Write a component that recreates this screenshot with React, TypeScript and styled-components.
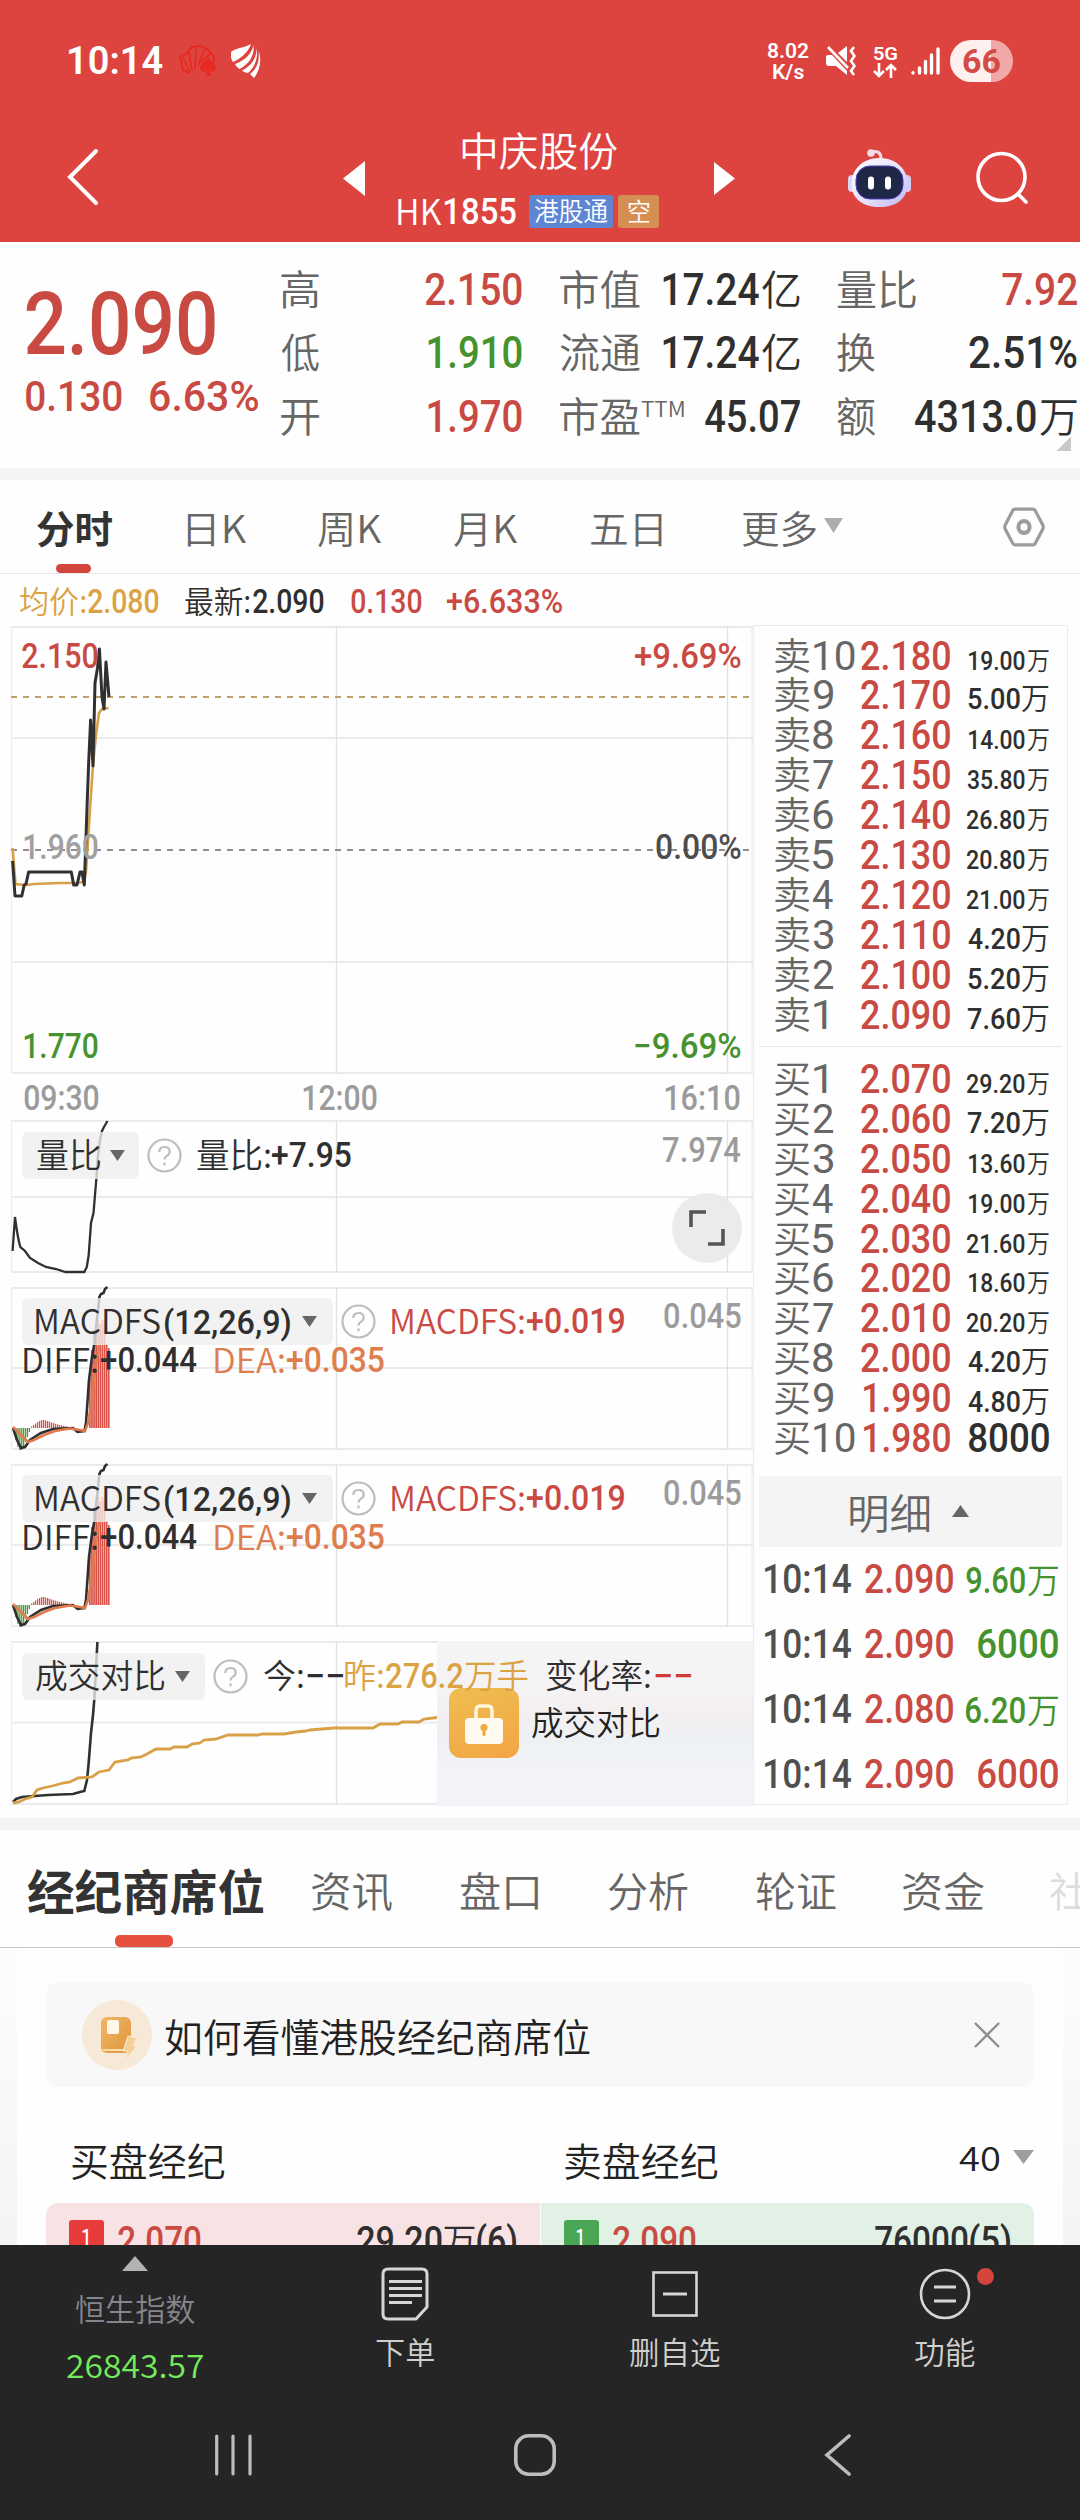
import React, { useMemo } from 'react';
import styled, { createGlobalStyle, css } from 'styled-components';

const LATIN = '"Roboto", "Liberation Sans", sans-serif';
const CJK = '"Noto Sans CJK SC", "Noto Sans", sans-serif';

const RED = '#c94a43';
const GREEN = '#46922f';
const INK = '#2f2f2f';
const GRAY = '#666666';
const MUTE = '#9b9b9b';
const GOLD = '#dba344';
const ORANGE = '#e07d4f';

const Global = createGlobalStyle`
  * { box-sizing: border-box; }
  html, body { margin: 0; padding: 0; background: #fff; }
  body { width: 1080px; height: 2520px; overflow: hidden; font-family: ${CJK}; }
  svg { display: block; flex: none; }
`;

/* ---------- condensed text: glyph run squeezed to a given ink width ---------- */
const FitBox = styled.span<{ $size: number; $cn: boolean; $color: string; $weight: number; $ml: number }>`
  display: inline-block;
  flex: none;
  height: 1em;
  line-height: 1;
  white-space: pre;
  margin-left: ${(p) => p.$ml}px;
  font-family: ${(p) => (p.$cn ? CJK : LATIN)};
  font-size: ${(p) => p.$size}px;
  font-weight: ${(p) => p.$weight};
  color: ${(p) => p.$color};
`;
const FitRun = styled.span`
  display: inline-block;
  transform-origin: 0 50%;
`;

let ctx: CanvasRenderingContext2D | null = null;

type FitProps = {
  w: number;
  s: number;
  c?: string;
  cn?: boolean;
  wt?: number;
  ml?: number;
  base?: boolean;
  children: string;
};

function Fit({ w, s, c = INK, cn = false, wt, ml = 0, base = false, children }: FitProps) {
  const weight = wt ?? (cn ? 350 : 500);
  const m = useMemo(() => {
    if (!ctx) ctx = document.createElement('canvas').getContext('2d');
    if (!ctx) return { k: 1, x: 0 };
    ctx.font = `${weight} ${s}px ${cn ? CJK : LATIN}`;
    const t = ctx.measureText(children);
    const ink = t.actualBoundingBoxLeft + t.actualBoundingBoxRight;
    const k = w / ink;
    return { k, x: t.actualBoundingBoxLeft * k };
  }, [w, s, cn, weight, children]);
  const y = cn && !base ? -0.056 * s : 0;
  return (
    <FitBox $size={s} $cn={cn} $color={c} $weight={weight} $ml={ml} style={{ width: w }}>
      <FitRun style={{ transform: `translate(${m.x}px, ${y}px) scaleX(${m.k})` }}>{children}</FitRun>
    </FitBox>
  );
}

/* ---------- page ---------- */
const Page = styled.div`
  width: 1080px;
  height: 2520px;
  overflow: hidden;
  background: #fefefe;
  display: flex;
  flex-direction: column;
`;
const Row = styled.div<{ $h?: number; $pl?: number; $pr?: number; $pt?: number; $between?: boolean }>`
  display: flex;
  align-items: center;
  flex: none;
  ${(p) => p.$h && css`height: ${p.$h}px;`}
  padding-left: ${(p) => p.$pl ?? 0}px;
  padding-right: ${(p) => p.$pr ?? 0}px;
  padding-top: ${(p) => p.$pt ?? 0}px;
  justify-content: ${(p) => (p.$between ? 'space-between' : 'flex-start')};
`;
const Band = styled.div`
  height: 12px;
  flex: none;
  background: #f4f4f4;
`;

/* ---------- header ---------- */
const Header = styled.header`
  height: 242px;
  flex: none;
  background: #dd443f;
`;
const StatusBar = styled(Row)`
  height: 118px;
  padding: 4px 67px 0 69px;
`;
const StatusGroup = styled.div`
  display: flex;
  align-items: center;
`;
const Stack = styled.div<{ $ml: number; $gap: number }>`
  display: flex;
  flex-direction: column;
  align-items: center;
  gap: ${(p) => p.$gap}px;
  margin-left: ${(p) => p.$ml}px;
`;
const Battery = styled.div`
  width: 63px;
  height: 42px;
  margin-left: 10px;
  border-radius: 21px;
  display: flex;
  align-items: center;
  justify-content: center;
  background: linear-gradient(90deg, #fdf0ef 0 41px, #f1a9a7 41px);
`;
const NavBar = styled(Row)`
  height: 120px;
`;
const TitleColumn = styled.div`
  width: 262px;
  height: 120px;
  padding-top: 3px;
  margin: 0 54px 0 33px;
  display: flex;
  flex-direction: column;
`;
const TitleLine = styled.div<{ $pl: number }>`
  height: 60px;
  flex: none;
  display: flex;
  align-items: center;
  padding-left: ${(p) => p.$pl}px;
`;
const Badge = styled.span<{ $bg: string; $w: number; $ml: number }>`
  width: ${(p) => p.$w}px;
  height: 33px;
  margin-left: ${(p) => p.$ml}px;
  display: flex;
  align-items: center;
  justify-content: center;
  border-radius: 3px;
  background: ${(p) => p.$bg};
`;
const IconSlot = styled.div<{ $ml: number; $mt?: number }>`
  margin-left: ${(p) => p.$ml}px;
  margin-top: ${(p) => p.$mt ?? 0}px;
  flex: none;
`;

function TopHeader() {
  return (
    <Header>
      <StatusBar $between>
        <StatusGroup>
          <Fit w={94} s={39} c="#fff" wt={600}>10:14</Fit>
          <IconSlot $ml={16}>
            <svg width="38" height="32" viewBox="0 0 38 32" fill="none" stroke="#e8291f" strokeWidth="2">
              <path d="M11 28 L4 25 L1 12 L8 8 L13 2 L22 1 L29 5 L35 12 L34 20" />
              <path d="M11 28 L4 12 M13 26 L10 7 M16 24 L17 3 M19 21 L25 5 M22 17 L31 9" strokeWidth="1.6" />
              <path d="M29 12 C27 17 21 19 21 23 C21 27 26 28 28 25 L27 31 H32 L30 25 C33 28 37 27 37 23 C37 19 31 17 29 12Z" fill="#e8291f" stroke="none" />
            </svg>
          </IconSlot>
          <IconSlot $ml={14}>
            <svg width="30" height="34" viewBox="0 0 30 34" fill="#fff">
              <path d="M20 0 C13 4 4 4 0 8 C-1 12 0 15 2 18 C9 15 17 9 20 0Z" />
              <path d="M22.500 1 C21 10 13 17 4 20 C5 22 7 24 8.500 25 C17 21 24 12 22.500 1Z" />
              <path d="M25 3 C27 13 20 22 11 26.500 C13 28 15 29 17 29 C24 23 28 13 25 3Z" />
              <path d="M27.500 7 C29 18 25 26 19 30 L23 34 C29 26 31 16 27.500 7Z" />
            </svg>
          </IconSlot>
        </StatusGroup>
        <StatusGroup>
          <Stack $ml={0} $gap={-1}>
            <Fit w={41} s={21} c="#fff" wt={600}>8.02</Fit>
            <Fit w={31} s={20} c="#fff" wt={600}>K/s</Fit>
          </Stack>
          <IconSlot $ml={17}>
            <svg width="30" height="30" viewBox="0 0 30 30">
              <path d="M0 11 Q0 9 2 9 H6 L21 25 V29 L10 20 H3 Q0 20 0 17Z M12 7 L21 0 V16Z" fill="#fff" />
              <path d="M2 1 L22 22" stroke="#fff" strokeWidth="2.6" />
              <path d="M28 1 L25 5 L28.5 10 L25 15 L28.5 20 L25 25 L28 29" fill="none" stroke="#fff" strokeWidth="2.6" />
            </svg>
          </IconSlot>
          <Stack $ml={17} $gap={0}>
            <Fit w={23} s={19} c="#fff" wt={600}>5G</Fit>
            <svg width="24" height="15" viewBox="0 0 24 15" fill="none" stroke="#fff" strokeWidth="2.6">
              <path d="M6 0 V13 M1 8 L6 13 L11 8 M18 15 V2 M13 7 L18 2 L23 7" />
            </svg>
          </Stack>
          <IconSlot $ml={14}>
            <svg width="29" height="28" viewBox="0 0 29 28" stroke="#fff" strokeWidth="3.4" strokeLinecap="round">
              <path d="M2 25.6 V26 M8.5 21 V26 M14.5 14.5 V26 M20.5 8 V26 M27 2 V26" />
            </svg>
          </IconSlot>
          <Battery>
            <Fit w={37} s={33} c="#d54a45" wt={700}>66</Fit>
          </Battery>
        </StatusGroup>
      </StatusBar>
      <NavBar $pl={66}>
        <svg width="34" height="60" viewBox="0 0 34 60" fill="none" stroke="#fff" strokeWidth="4" strokeLinecap="round">
          <path d="M30 3 L4 29 L30 55" />
        </svg>
        <IconSlot $ml={243}>
          <svg width="22" height="35" viewBox="0 0 22 35" fill="#fff"><path d="M22 0 V35 L0 17.5Z" /></svg>
        </IconSlot>
        <TitleColumn>
          <TitleLine $pl={64}>
            <Fit w={155} s={40} c="#fff" cn>中庆股份</Fit>
          </TitleLine>
          <TitleLine $pl={0}>
            <Fit w={44} s={35} c="#fff" cn>HK</Fit>
            <Fit w={71} s={37} c="#fff" ml={3}>1855</Fit>
            <Badge $bg="#5f86d2" $w={84} $ml={13}><Fit w={74} s={26} c="#fff" cn>港股通</Fit></Badge>
            <Badge $bg="#d68f52" $w={41} $ml={5}><Fit w={22} s={25} c="#fff" cn>空</Fit></Badge>
          </TitleLine>
        </TitleColumn>
        <svg width="21" height="33" viewBox="0 0 21 33" fill="#fff"><path d="M0 0 V33 L21 16.5Z" /></svg>
        <IconSlot $ml={113}>
          <svg width="63" height="60" viewBox="0 0 63 60">
            <defs>
              <linearGradient id="head" x1="0" y1="0" x2="1" y2="1">
                <stop offset="0" stopColor="#ffffff" /><stop offset=".6" stopColor="#e4defa" /><stop offset="1" stopColor="#b9b6ee" />
              </linearGradient>
            </defs>
            <path d="M23 4 C30 2 33 5 33 11" fill="none" stroke="#f3dcea" strokeWidth="3" />
            <circle cx="23" cy="5" r="3.800" fill="#f5dde8" />
            <rect x="0" y="27" width="8" height="17" rx="4" fill="#d9d6f4" />
            <rect x="55" y="27" width="8" height="17" rx="4" fill="#d0cdf4" />
            <path d="M31.500 10 C48 10 59.500 21 59.500 36 C59.500 51 48 59 31.500 59 C15 59 3.500 51 3.500 36 C3.500 21 15 10 31.500 10Z" fill="url(#head)" />
            <rect x="8" y="18" width="47" height="33" rx="14" fill="#1f2747" stroke="#4a3cc0" strokeWidth="1" />
            <rect x="20" y="28.500" width="6" height="13" rx="3" fill="#fff" />
            <rect x="37" y="28.500" width="6" height="13" rx="3" fill="#fff" />
          </svg>
        </IconSlot>
        <IconSlot $ml={64}>
          <svg width="56" height="54" viewBox="0 0 56 54" fill="none" stroke="#fff" strokeWidth="3.6" strokeLinecap="round">
            <circle cx="26.5" cy="26" r="23.5" /><path d="M43 43 L51 51" />
          </svg>
        </IconSlot>
      </NavBar>
    </Header>
  );
}

/* ---------- quote ---------- */
const Quote = styled.section`
  height: 226px;
  flex: none;
  display: flex;
  position: relative;
`;
const PriceColumn = styled.div`
  width: 281px;
  padding: 42px 0 0 26px;
`;
const StatColumn = styled.div<{ $w: number; $ml?: number }>`
  width: ${(p) => p.$w}px;
  margin-left: ${(p) => p.$ml ?? 0}px;
  padding-top: 16px;
`;
const Inline = styled.span`
  display: flex;
  align-items: center;
`;
const Sup = styled.span`
  display: flex;
  margin: -16px 0 0 0;
`;
const Corner = styled.i`
  position: absolute;
  right: 9px;
  bottom: 17px;
  width: 15px;
  height: 15px;
  background: linear-gradient(135deg, transparent 50%, #c9c9c9 50%);
`;

function QuotePanel() {
  const d = 45;
  const h = 63.3;
  return (
    <Quote>
      <PriceColumn>
        <Row $h={80}><Fit w={189} s={88} c={RED}>2.090</Fit></Row>
        <Row $h={64}>
          <Fit w={96} s={43} c={RED}>0.130</Fit>
          <Fit w={108} s={43} c={RED} ml={28}>6.63%</Fit>
        </Row>
      </PriceColumn>
      <StatColumn $w={241}>
        <Row $h={h} $between><Fit w={38} s={41} c={GRAY} cn>高</Fit><Fit w={97} s={d} c={RED}>2.150</Fit></Row>
        <Row $h={h} $between><Fit w={38} s={41} c={GRAY} cn>低</Fit><Fit w={94} s={d} c={GREEN}>1.910</Fit></Row>
        <Row $h={h} $between><Fit w={38} s={41} c={GRAY} cn>开</Fit><Fit w={94} s={d} c={RED}>1.970</Fit></Row>
      </StatColumn>
      <StatColumn $w={240} $ml={38}>
        <Row $h={h} $between>
          <Fit w={80} s={41} c={GRAY} cn>市值</Fit>
          <Inline><Fit w={96} s={d}>17.24</Fit><Fit w={38} s={41} cn ml={3}>亿</Fit></Inline>
        </Row>
        <Row $h={h} $between>
          <Fit w={80} s={41} c={GRAY} cn>流通</Fit>
          <Inline><Fit w={96} s={d}>17.24</Fit><Fit w={38} s={41} cn ml={3}>亿</Fit></Inline>
        </Row>
        <Row $h={h} $between>
          <Inline><Fit w={80} s={41} c={GRAY} cn>市盈</Fit><Sup><Fit w={43} s={22} c={GRAY} cn ml={1}>TTM</Fit></Sup></Inline>
          <Fit w={95} s={d}>45.07</Fit>
        </Row>
      </StatColumn>
      <StatColumn $w={240} $ml={37}>
        <Row $h={h} $between><Fit w={79} s={41} c={GRAY} cn>量比</Fit><Fit w={75} s={d} c={RED}>7.92</Fit></Row>
        <Row $h={h} $between><Fit w={38} s={41} c={GRAY} cn>换</Fit><Fit w={108} s={d}>2.51%</Fit></Row>
        <Row $h={h} $between>
          <Fit w={38} s={41} c={GRAY} cn>额</Fit>
          <Inline><Fit w={121} s={d}>4313.0</Fit><Fit w={37} s={41} cn ml={4}>万</Fit></Inline>
        </Row>
      </StatColumn>
      <Corner />
    </Quote>
  );
}

/* ---------- period tabs ---------- */
const Periods = styled.nav`
  height: 94px;
  flex: none;
  display: flex;
  align-items: center;
  border-bottom: 1px solid #e6e6e6;
  position: relative;
  padding: 5px 0 0 37px;
`;
const Underline = styled.i<{ $l: number; $w: number; $h: number; $bg: string }>`
  position: absolute;
  bottom: 0;
  left: ${(p) => p.$l}px;
  width: ${(p) => p.$w}px;
  height: ${(p) => p.$h}px;
  border-radius: 5px;
  background: ${(p) => p.$bg};
`;

function PeriodTabs() {
  return (
    <Periods>
      <Fit w={75} s={38} cn wt={700} c="#333">分时</Fit>
      <Fit w={60} s={38} cn c={GRAY} ml={75}>日K</Fit>
      <Fit w={64} s={38} cn c={GRAY} ml={71}>周K</Fit>
      <Fit w={64} s={38} cn c={GRAY} ml={72}>月K</Fit>
      <Fit w={71} s={38} cn c={GRAY} ml={73}>五日</Fit>
      <Fit w={74} s={38} cn c={GRAY} ml={80}>更多</Fit>
      <IconSlot $ml={8} $mt={-7}>
        <svg width="19" height="15" viewBox="0 0 19 15" fill="#adadad"><path d="M0 0 H19 L9.5 15Z" /></svg>
      </IconSlot>
      <IconSlot $ml={160} $mt={-4}>
        <svg width="42" height="40" viewBox="0 0 42 38" preserveAspectRatio="none" fill="none" stroke="#9c9c9c" strokeWidth="3.2" strokeLinejoin="round">
          <path d="M12 2 H30 Q31.500 2 32.300 3.500 L40 17.500 Q40.500 19 40 20.500 L32.300 34.500 Q31.500 36 30 36 H12 Q10.500 36 9.700 34.500 L2 20.500 Q1.500 19 2 17.500 L9.700 3.500 Q10.500 2 12 2Z" />
          <circle cx="21" cy="19" r="5.600" strokeWidth="4" />
        </svg>
      </IconSlot>
      <Underline $l={56} $w={35} $h={9} $bg="#d2453d" />
    </Periods>
  );
}

/* ---------- charts ---------- */
const Body = styled.section`
  height: 1244px;
  flex: none;
  display: flex;
  align-items: flex-start;
`;
const ChartColumn = styled.div`
  width: 753px;
  padding-left: 11px;
`;
const Panel = styled.div<{ $h: number; $mb?: number }>`
  position: relative;
  height: ${(p) => p.$h}px;
  margin-bottom: ${(p) => p.$mb ?? 0}px;
`;
const Canvas = styled.svg`
  position: absolute;
  left: 0;
  top: 0;
  overflow: visible;
`;
const Over = styled.div<{ $pt?: number }>`
  position: relative;
  display: flex;
  flex-direction: column;
  height: 100%;
  padding: ${(p) => p.$pt ?? 0}px 12px 0 11px;
`;
const Chip = styled.div<{ $w: number }>`
  width: ${(p) => p.$w}px;
  height: 47px;
  flex: none;
  display: flex;
  align-items: center;
  padding-left: 14px;
  border-radius: 6px;
  background: rgba(238, 238, 238, 0.78);
`;
const Spacer = styled.div`
  flex: 1;
`;
const UpShift = styled.div`
  display: flex;
  margin-top: -11px;
`;
const Expand = styled.button`
  position: absolute;
  right: 11px;
  top: 73px;
  width: 70px;
  height: 70px;
  padding: 0;
  border: 0;
  border-radius: 50%;
  background: #ebebeb;
  display: flex;
  align-items: center;
  justify-content: center;
`;
const Locked = styled.div`
  position: absolute;
  left: 426px;
  top: 0;
  width: 316px;
  height: 165px;
  display: flex;
  align-items: flex-start;
  padding: 47px 0 0 12px;
  background: linear-gradient(180deg, #f5f5f6 0%, #f5f2f4 32%, #f3eff1 45%, #eef1f4 60%, #f1f3f6 74%, #f5f3f9 100%);
`;
const LockBadge = styled.div`
  width: 70px;
  height: 70px;
  border-radius: 12px;
  background: linear-gradient(160deg, #f0bd52, #f2a544);
  display: flex;
  align-items: center;
  justify-content: center;
`;

function Help({ ml }: { ml: number }) {
  return (
    <IconSlot $ml={ml}>
      <svg width="35" height="35" viewBox="0 0 35 35" fill="none" stroke="#bdbdbd" strokeWidth="2.200">
        <circle cx="17.500" cy="17.500" r="16" />
        <path d="M12.300 14 Q12.300 9 17.500 9 Q22.700 9 22.700 13.500 Q22.700 16.200 19.800 17.900 Q17.500 19.300 17.500 21.500" />
        <path d="M17.500 24.500 V27.300" />
      </svg>
    </IconSlot>
  );
}
function Caret({ ml }: { ml: number }) {
  return (
    <IconSlot $ml={ml}>
      <svg width="15" height="11" viewBox="0 0 15 11" fill="#666"><path d="M0 0 H15 L7.500 11Z" /></svg>
    </IconSlot>
  );
}
function Grid({ top, h, mid }: { top: number; h: number; mid: number[] }) {
  return (
    <g fill="none">
      {[top + 1, ...mid, top + h - 1].map((y) => <path key={y} d={`M11 ${y} H753`} strokeWidth="2" stroke="#ebebeb" />)}
      <path d={`M336.500 ${top} V${top + h} M727.500 ${top} V${top + h}`} strokeWidth="1.300" stroke="#e2e2e2" />
      <path d={`M11.500 ${top} V${top + h} M752 ${top} V${top + h}`} strokeWidth="1.500" stroke="#f0f0f0" />
    </g>
  );
}

function PriceChart() {
  return (
    <Panel $h={448}>
      <Canvas width="742" height="448" viewBox="11 626 742 448">
        <Grid top={626} h={448} mid={[738, 962]} />
        <path d="M11 697 H749" stroke="#bba06a" strokeWidth="2" strokeDasharray="6 6" />
        <path d="M11 850 H749" stroke="#8f8f8f" strokeWidth="2" strokeDasharray="6 6" />
        <path d="M12.600 848 L13.500 860 L15.500 884 L26 885 L34 884 L60 883 L75 883 L84 882 L86 872 L90.600 800 L93 765 L96 735 L99 713 L102 709 L108.500 708" fill="none" stroke="#d9a048" strokeWidth="2.600" />
        <path d="M12.600 861 L15 896 H21.800 L24.200 885 L26 884 L28.600 872 H71.300 L73.700 885 H77 L80 872 H82 L84.300 885 L87.300 800 L88.700 762 L90.600 720 L93 766 L95 683 L97.500 668 L99.400 649 L102 697 L104 709 L106 662 L109 697" fill="none" stroke="#303030" strokeWidth="3" strokeLinejoin="round" />
      </Canvas>
      <Over $pt={10}>
        <Row $h={40} $between><Fit w={76} s={35} c={RED}>2.150</Fit><Fit w={106} s={35} c={RED}>+9.69%</Fit></Row>
        <Row $h={342} $between><Fit w={74} s={35} c="#a0a0a0" ml={2}>1.960</Fit><Fit w={85} s={35} c="#4d4d4d">0.00%</Fit></Row>
        <Row $h={56} $between><Fit w={74} s={35} c={GREEN} ml={2}>1.770</Fit><Fit w={106} s={35} c={GREEN}>−9.69%</Fit></Row>
      </Over>
    </Panel>
  );
}

function VolumeRatio() {
  return (
    <Panel $h={153} $mb={14}>
      <Canvas width="742" height="153" viewBox="11 1120 742 153">
        <Grid top={1120} h={153} mid={[1197]} />
        <path d="M12.600 1251 L15 1217 Q18 1240 20.400 1247 L25 1251 L30 1258 L38 1263 L46 1267 L56 1269 L65.500 1272 H84.300 L86.800 1267 L88.700 1255 L91 1223 L93.500 1213 L96.500 1177 L98 1155 L100 1140 L102 1131 L104 1127 L107.500 1121" fill="none" stroke="#303030" strokeWidth="2.300" />
      </Canvas>
      <Over $pt={12}>
        <Row $h={47}>
          <Chip $w={117}><Fit w={63} s={34} cn ml={1}>量比</Fit><Caret ml={10} /></Chip>
          <Help ml={8} />
          <Fit w={73} s={34} cn ml={15}>量比:</Fit>
          <Fit w={79} s={35} ml={2}>+7.95</Fit>
          <Spacer />
          <UpShift><Fit w={78} s={35} c={MUTE}>7.974</Fit></UpShift>
        </Row>
      </Over>
      <Expand aria-label="expand">
        <svg width="36" height="36" viewBox="0 0 36 36" fill="none" stroke="#555" strokeWidth="3.600">
          <path d="M2 17 V2 H17 M34 19 V34 H19" />
        </svg>
      </Expand>
    </Panel>
  );
}

const redBars = [1.5, 3, 4.5, 6, 7, 8, 8, 7.5, 7, 6.2, 5.5, 4.8, 4.2, 3.6, 3, 2.6, 2.2, 1.8, 1.4, 1, 0.8].map((h, i) => ({ x: 31 + i * 2, h }));
const tallBars = [50, 78, 98, 106, 108, 104, 108, 98, 84, 80].map((h, i) => ({ x: 89 + i * 2.1, h }));
const greenBars = [5, 12, 19, 22, 22, 19, 14, 9, 4].map((h, i) => ({ x: 13.5 + i * 1.9, h }));

function Macd() {
  return (
    <Panel $h={163} $mb={14}>
      <Canvas width="742" height="163" viewBox="11 1287 742 163">
        <Grid top={1287} h={163} mid={[1368]} />
        {greenBars.map((b) => <rect key={b.x} x={b.x} y={1428} width="1.300" height={b.h} fill="#4c9a36" />)}
        {redBars.map((b) => <rect key={b.x} x={b.x} y={1428 - b.h} width="1.300" height={b.h} fill="#d9534b" />)}
        {tallBars.map((b) => <rect key={b.x} x={b.x} y={1428 - b.h} width="1.700" height={b.h} fill="#d9534b" />)}
        <path d="M13 1428 L17 1440 L21 1448 L25 1447 L30 1440 L41 1433 L53 1429 L73 1428 L77.500 1432 L84.300 1431 L86 1423 L89 1380 L92 1357 L94.500 1343 L97 1320 L99.400 1297 L101 1294 L103.500 1293 L105 1289 L107.500 1287" fill="none" stroke="#303030" strokeWidth="2.600" />
        <path d="M13 1427 L20 1434 L28 1442 L34 1440 L44 1435 L55 1431 L70 1428.500 L80 1430 L85 1431 L88 1423 L91 1405 L94 1378 L98 1352 L102 1334 L106 1322" fill="none" stroke="#e17b4c" strokeWidth="2.600" />
      </Canvas>
      <Over $pt={11}>
        <Row $h={47}>
          <Chip $w={311}>
            <Fit w={124} s={34} cn>MACDFS</Fit>
            <Fit w={125} s={34} ml={5}>(12,26,9)</Fit>
            <Caret ml={12} />
          </Chip>
          <Help ml={8} />
          <Fit w={132} s={34} cn c={RED} ml={16}>MACDFS:</Fit>
          <Fit w={97} s={35} c={RED} ml={3}>+0.019</Fit>
          <Spacer />
          <UpShift><Fit w={77} s={35} c={MUTE}>0.045</Fit></UpShift>
        </Row>
        <Row $h={31}>
          <Fit w={73} s={34} cn ml={2}>DIFF:</Fit>
          <Fit w={96} s={35} ml={4}>+0.044</Fit>
          <Fit w={69} s={34} cn c={ORANGE} ml={18}>DEA:</Fit>
          <Fit w={97} s={35} c={ORANGE} ml={3}>+0.035</Fit>
        </Row>
      </Over>
    </Panel>
  );
}

function DealCompare() {
  return (
    <Panel $h={164}>
      <Canvas width="742" height="164" viewBox="11 1641 742 164">
        <Grid top={1641} h={164} mid={[1722.5]} />
        <path d="M13 1802 L16 1799 L22 1797 L35 1796 L48 1795 L73 1794 L80 1792 L84.300 1791 L87 1780 L88.500 1765 L91 1733 L93 1715 L94.500 1697 L97.400 1642" fill="none" stroke="#303030" strokeWidth="2.600" />
        <path d="M13 1803 L19 1802 L25 1799 L32 1797 L37 1790 L43 1788 L52 1786 L63 1783 L70 1782 L78 1778 L92 1777 L99 1772 L109 1770 L115 1762 L128 1760 L131 1758 L141 1757 L147 1754 L156 1749 H170 L174 1747 H187 L192 1744 L200 1743 L204 1740 L216 1739 L228 1735 H258 L262 1734 H284 L296 1732 L306 1731 L310 1730 L334 1728 H373 L380 1724 L398 1724 L402 1722 H419 L424 1719 L437 1717.500" fill="none" stroke="#d9a048" strokeWidth="2.800" />
      </Canvas>
      <Locked>
        <LockBadge>
          <svg width="40" height="42" viewBox="0 0 40 42">
            <path d="M12 16 V9 Q12 4 16 4 H24 Q28 4 28 9 V16" fill="none" stroke="#fff6dc" strokeWidth="3.600" />
            <rect x="1" y="16" width="38" height="26" rx="4" fill="#fffaf0" />
            <circle cx="20" cy="25.500" r="3.600" fill="#eeab45" /><rect x="18.400" y="26" width="3.200" height="8" rx="1.500" fill="#eeab45" />
          </svg>
        </LockBadge>
        <Row $h={70}><Fit w={128} s={33} cn ml={13} c="#222">成交对比</Fit></Row>
      </Locked>
      <Over $pt={11}>
        <Row $h={47} $pt={1}>
          <Chip $w={183}><Fit w={129} s={33} cn>成交对比</Fit><Caret ml={10} /></Chip>
          <Help ml={8} />
          <Fit w={39} s={33} cn ml={16}>今:</Fit>
          <Fit w={37} s={35} ml={4}>−−</Fit>
          <Fit w={38} s={33} cn c={GOLD} ml={1}>昨:</Fit>
          <Fit w={77} s={35} c={GOLD} ml={3}>276.2</Fit>
          <Fit w={63} s={33} cn c={GOLD} ml={2}>万手</Fit>
          <Fit w={104} s={33} cn ml={18}>变化率:</Fit>
          <Fit w={37} s={35} c="#d23c34" ml={5}>−−</Fit>
        </Row>
      </Over>
    </Panel>
  );
}

/* ---------- order book ---------- */
const Book = styled.aside`
  width: 315px;
  height: 1180px;
  margin: 51px 0 0 0;
  border: 1px solid #ebebeb;
  display: flex;
  flex-direction: column;
`;
const Levels = styled.div<{ $row: number; $pt: number }>`
  padding: ${(p) => p.$pt}px 18px 0 21px;
  display: grid;
  grid-auto-rows: ${(p) => p.$row}px;
`;
const Level = styled.div`
  display: flex;
  align-items: baseline;
`;
const VolumeCell = styled.span`
  width: 99px;
  display: flex;
  justify-content: flex-end;
  align-items: baseline;
`;
const Divider = styled.div`
  height: 1px;
  width: 303px;
  margin: 0 5px;
  background: #e6e6e6;
  flex: none;
`;
const DetailBar = styled.div`
  height: 71px;
  margin: 0 5px;
  background: #f4f4f4;
  display: flex;
  align-items: center;
  padding: 5px 0 0 91px;
  flex: none;
`;
const Trades = styled.div`
  padding: 0 9px 0 11px;
`;
const TradeRow = styled.div`
  height: 65px;
  display: flex;
  align-items: baseline;
`;

const asks: [string, string, string][] = [
  ['10', '2.180', '19.00'], ['9', '2.170', '5.00'], ['8', '2.160', '14.00'], ['7', '2.150', '35.80'], ['6', '2.140', '26.80'],
  ['5', '2.130', '20.80'], ['4', '2.120', '21.00'], ['3', '2.110', '4.20'], ['2', '2.100', '5.20'], ['1', '2.090', '7.60'],
];
const bids: [string, string, string][] = [
  ['1', '2.070', '29.20'], ['2', '2.060', '7.20'], ['3', '2.050', '13.60'], ['4', '2.040', '19.00'], ['5', '2.030', '21.60'],
  ['6', '2.020', '18.60'], ['7', '2.010', '20.20'], ['8', '2.000', '4.20'], ['9', '1.990', '4.80'], ['10', '1.980', '8000'],
];

function LevelLine({ side, n, price, vol }: { side: string; n: string; price: string; vol: string }) {
  const nw = n === '10' ? 41 : n === '1' ? 13 : 20;
  const pw = price[0] === '1' ? 86 : 89;
  const small = vol.length === 5;
  const plain = vol === '8000';
  const vw = small ? (vol[0] === '1' ? 56 : 58) : 52;
  return (
    <Level>
      <Fit w={34} s={37} cn base c={GRAY}>{side}</Fit>
      <Fit w={nw} s={40} c={GRAY} wt={400} ml={n === '1' || n === '10' ? 5 : 4}>{n}</Fit>
      <Spacer />
      <Fit w={pw} s={40} c={RED}>{price}</Fit>
      <VolumeCell>
        {plain ? <Fit w={80} s={40}>{vol}</Fit> : (
          <>
            <Fit w={vw} s={small ? 25.5 : 30}>{vol}</Fit>
            <Fit w={small ? 22 : 27} s={small ? 25 : 30} cn base ml={2}>万</Fit>
          </>
        )}
      </VolumeCell>
    </Level>
  );
}

function OrderBook() {
  return (
    <Book>
      <Levels $row={39.9} $pt={9.5}>
        {asks.map((r) => <LevelLine key={r[0]} side="卖" n={r[0]} price={r[1]} vol={r[2]} />)}
      </Levels>
      <Row $h={25}><Divider /></Row>
      <Levels $row={39.8} $pt={0}>
        {bids.map((r) => <LevelLine key={r[0]} side="买" n={r[0]} price={r[1]} vol={r[2]} />)}
      </Levels>
      <Row $h={18.5} />
      <DetailBar>
        <Fit w={80} s={41} cn c={GRAY}>明细</Fit>
        <IconSlot $ml={22} $mt={-5}>
          <svg width="17" height="12" viewBox="0 0 17 12" fill="#666"><path d="M0 12 H17 L8.500 0Z" /></svg>
        </IconSlot>
      </DetailBar>
      <Row $h={13} />
      <Trades>
        {[['2.090', '9.60', GREEN], ['2.090', '6000', GREEN], ['2.080', '6.20', GREEN], ['2.090', '6000', RED]].map(([p, v, c], i) => (
          <TradeRow key={i}>
            <Fit w={86} s={40} c="#4f4f4f">10:14</Fit>
            <Fit w={88} s={40} c={RED} ml={14}>{p}</Fit>
            <Spacer />
            {v === '6000' ? <Fit w={80} s={40} c={c}>{v}</Fit> : (
              <>
                <Fit w={59} s={36} c={c}>{v}</Fit>
                <Fit w={30} s={34} cn base c={c} ml={3}>万</Fit>
              </>
            )}
          </TradeRow>
        ))}
      </Trades>
    </Book>
  );
}

function ChartArea() {
  return (
    <Body>
      <ChartColumn>
        <Row $h={52} $pl={9} $pt={3}>
          <Fit w={66} s={31} cn c={GOLD}>均价:</Fit>
          <Fit w={71} s={33} c={GOLD} ml={2}>2.080</Fit>
          <Fit w={65} s={31} cn ml={26}>最新:</Fit>
          <Fit w={71} s={33} ml={3}>2.090</Fit>
          <Fit w={71} s={33} c={RED} ml={27}>0.130</Fit>
          <Fit w={115} s={33} c={RED} ml={25}>+6.633%</Fit>
        </Row>
        <PriceChart />
        <Row $h={46} $pl={13} $pr={13} $pt={3}>
          <Fit w={75} s={35} c={MUTE}>09:30</Fit>
          <Fit w={74} s={35} c={MUTE} ml={204}>12:00</Fit>
          <Fit w={75} s={35} c={MUTE} ml={288}>16:10</Fit>
        </Row>
        <VolumeRatio />
        <Macd />
        <Macd />
        <DealCompare />
      </ChartColumn>
      <OrderBook />
    </Body>
  );
}

/* ---------- info tabs and broker card ---------- */
const InfoTabs = styled.nav`
  height: 118px;
  flex: none;
  display: flex;
  align-items: center;
  padding: 6px 0 0 27px;
  position: relative;
  overflow: hidden;
  border-bottom: 1.5px solid #c8c8c8;
`;
const Content = styled.section`
  height: 297px;
  flex: none;
  overflow: hidden;
  padding: 0 17px;
  background: linear-gradient(180deg, #fdfdfd, #f4f4f4);
`;
const Card = styled.div`
  height: 297px;
  overflow: hidden;
  background: #fefefe;
  border-radius: 16px 16px 0 0;
  padding: 34px 29px 0 29px;
`;
const Tip = styled.div`
  height: 105px;
  border-radius: 12px;
  background: #f8f8f8;
  display: flex;
  align-items: center;
  padding: 0 34px 0 36px;
`;
const TipText = styled.div`
  display: flex;
  padding-top: 6px;
`;
const BarPair = styled.div`
  display: grid;
  grid-template-columns: 1fr 1fr;
  gap: 1px;
  margin-top: 1px;
  border-radius: 12px 12px 0 0;
  overflow: hidden;
`;
const Bar = styled.div<{ $bg: string }>`
  height: 76px;
  background: ${(p) => p.$bg};
  display: flex;
  align-items: center;
  padding: 0 24px 0 23px;
`;
const Rank = styled.span<{ $bg: string }>`
  width: 35px;
  height: 42px;
  border-radius: 3px;
  background: ${(p) => p.$bg};
  display: flex;
  align-items: center;
  justify-content: center;
`;
const CountPicker = styled.div`
  display: flex;
  align-items: center;
  margin-top: -5px;
`;

function BrokerSection() {
  return (
    <>
      <InfoTabs>
        <Fit w={236} s={48} cn wt={700} c="#333">经纪商席位</Fit>
        <Fit w={80} s={41} cn c={GRAY} ml={49}>资讯</Fit>
        <Fit w={78} s={41} cn c={GRAY} ml={68}>盘口</Fit>
        <Fit w={80} s={41} cn c={GRAY} ml={70}>分析</Fit>
        <Fit w={80} s={41} cn c={GRAY} ml={68}>轮证</Fit>
        <Fit w={81} s={41} cn c={GRAY} ml={67}>资金</Fit>
        <Fit w={38} s={41} cn c="#dcdcdc" ml={66}>社</Fit>
        <Underline $l={115} $w={58} $h={12} $bg="#e44f40" />
      </InfoTabs>
      <Content>
        <Card>
          <Tip>
            <svg width="70" height="70" viewBox="0 0 70 70">
              <defs>
                <linearGradient id="book" x1="0" y1="0" x2="1" y2="1"><stop offset="0" stopColor="#efb768" /><stop offset="1" stopColor="#e0953a" /></linearGradient>
              </defs>
              <circle cx="35" cy="35" r="35" fill="#f7e9d7" />
              <rect x="19" y="17" width="30" height="36" rx="6" fill="url(#book)" />
              <path d="M21 50 H42" stroke="#f9ddb0" strokeWidth="2" />
              <rect x="25" y="20" width="12" height="14" rx="2" fill="#fff8ea" />
              <path d="M46 36 L55 38 L51 46 H55 L43 60 L46 51 H41Z" fill="#f3cf9b" stroke="#faead2" strokeWidth="1" />
            </svg>
            <TipText><Fit w={425} s={39} cn c="#222" ml={13}>如何看懂港股经纪商席位</Fit></TipText>
            <Spacer />
            <svg width="26" height="26" viewBox="0 0 26 26" stroke="#8e8e8e" strokeWidth="2.400"><path d="M1 1 L25 25 M25 1 L1 25" /></svg>
          </Tip>
          <Row $h={115} $pl={26} $pt={33}>
            <Fit w={152} s={38.5} cn c="#222">买盘经纪</Fit>
            <Fit w={152} s={38.5} cn c="#222" ml={341}>卖盘经纪</Fit>
            <Spacer />
            <CountPicker>
              <Fit w={40} s={34} cn c="#222">40</Fit>
              <IconSlot $ml={14} $mt={-3}>
                <svg width="21" height="14" viewBox="0 0 21 14" fill="#9e9e9e"><path d="M0 0 H21 L10.500 14Z" /></svg>
              </IconSlot>
            </CountPicker>
          </Row>
          <BarPair>
            <Bar $bg="#f9e2e3">
              <Rank $bg="#e83b3c"><Fit w={10} s={34} c="#fff" cn>1</Fit></Rank>
              <Fit w={83} s={39} c={RED} ml={14}>2.070</Fit>
              <Spacer />
              <Fit w={85} s={39}>29.20</Fit><Fit w={31} s={34} cn ml={2}>万</Fit><Fit w={39} s={38} ml={2}>(6)</Fit>
            </Bar>
            <Bar $bg="#e1f1e6">
              <Rank $bg="#4aa655"><Fit w={10} s={34} c="#fff" cn>1</Fit></Rank>
              <Fit w={83} s={39} c={RED} ml={14}>2.090</Fit>
              <Spacer />
              <Fit w={93} s={39}>76000</Fit><Fit w={40} s={38} ml={2}>(5)</Fit>
            </Bar>
          </BarPair>
        </Card>
      </Content>
    </>
  );
}

/* ---------- bottom ---------- */
const Bottom = styled.footer`
  height: 275px;
  flex: none;
  background: #252525;
`;
const ActionRow = styled.div`
  height: 140px;
  display: grid;
  grid-template-columns: repeat(4, 270px);
`;
const Action = styled.div<{ $pt: number; $gap: number }>`
  display: flex;
  flex-direction: column;
  align-items: center;
  padding-top: ${(p) => p.$pt}px;
  gap: ${(p) => p.$gap}px;
`;
const Glyph = styled.div`
  position: relative;
  height: 54px;
  display: flex;
  align-items: center;
`;
const Dot = styled.i`
  position: absolute;
  left: 58px;
  top: 1px;
  width: 17px;
  height: 17px;
  border-radius: 50%;
  background: #d4453c;
`;
const SystemNav = styled(Row)`
  height: 135px;
  padding-left: 215px;
  align-items: flex-start;
  padding-top: 49px;
`;

function BottomBars() {
  const line = '#d6d6d6';
  return (
    <Bottom>
      <ActionRow>
        <Action $pt={11} $gap={24}>
          <svg width="26" height="15" viewBox="0 0 26 15" fill="#b3b3b3"><path d="M0 15 H26 L13 0Z" /></svg>
          <Fit w={120} s={30.5} cn c="#85868c">恒生指数</Fit>
          <Fit w={137} s={32} cn c="#74ea5c">26843.57</Fit>
        </Action>
        <Action $pt={22} $gap={17}>
          <Glyph>
            <svg width="48" height="54" viewBox="0 0 48 54" fill="none" stroke={line} strokeWidth="3" strokeLinejoin="round">
              <path d="M7 2 H41 Q46 2 46 7 V40 L35 52 H7 Q2 52 2 47 V7 Q2 2 7 2Z" />
              <path d="M8 14.500 H41 M8 21.500 H41 M8 28.500 H41 M8 35.500 H31" />
            </svg>
          </Glyph>
          <Fit w={58} s={30.5} cn c="#cfcfcf">下单</Fit>
        </Action>
        <Action $pt={22} $gap={17}>
          <Glyph>
            <svg width="46" height="46" viewBox="0 0 46 46" fill="none" stroke={line} strokeWidth="2.600">
              <rect x="1.500" y="1.500" width="43" height="43" /><path d="M11 23 H35" strokeWidth="3" />
            </svg>
          </Glyph>
          <Fit w={90} s={30.5} cn c="#cfcfcf">删自选</Fit>
        </Action>
        <Action $pt={22} $gap={17}>
          <Glyph>
            <svg width="52" height="52" viewBox="0 0 52 52" fill="none" stroke={line} strokeWidth="2.600">
              <circle cx="26" cy="26" r="24" /><path d="M15 19 H37 M15 33 H37" strokeWidth="3" />
            </svg>
            <Dot />
          </Glyph>
          <Fit w={60} s={30.5} cn c="#cfcfcf">功能</Fit>
        </Action>
      </ActionRow>
      <SystemNav>
        <svg width="37" height="42" viewBox="0 0 37 42" stroke="#bdbdbd" strokeWidth="3.200" strokeLinecap="round">
          <path d="M1.700 2 V40 M18 2 V40 M35 2 V40" />
        </svg>
        <IconSlot $ml={262}>
          <svg width="42" height="42" viewBox="0 0 42 42" fill="none" stroke="#bdbdbd" strokeWidth="3.600"><rect x="1.800" y="1.800" width="38.400" height="38.400" rx="13" /></svg>
        </IconSlot>
        <IconSlot $ml={268}>
          <svg width="28" height="42" viewBox="0 0 28 42" fill="none" stroke="#bdbdbd" strokeWidth="3.600" strokeLinecap="round"><path d="M25 2 L3 21 L25 40" /></svg>
        </IconSlot>
      </SystemNav>
    </Bottom>
  );
}

export default function App() {
  return (
    <Page>
      <Global />
      <TopHeader />
      <QuotePanel />
      <Band />
      <PeriodTabs />
      <ChartArea />
      <Band />
      <BrokerSection />
      <BottomBars />
    </Page>
  );
}
